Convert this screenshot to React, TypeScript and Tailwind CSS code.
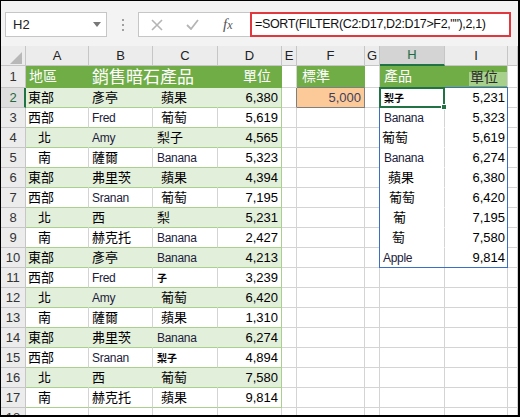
import React from 'react';

type DataRow = { a: string; b: string; c: string; d: string; cSmall?: boolean };

const DATA: DataRow[] = [
  { a: '東部', b: '彥亭', c: '蘋果', d: '6,380' },
  { a: '西部', b: 'Fred', c: '葡萄', d: '5,619' },
  { a: '北', b: 'Amy', c: '梨子', d: '4,565' },
  { a: '南', b: '薩爾', c: 'Banana', d: '5,323' },
  { a: '東部', b: '弗里茨', c: '蘋果', d: '4,394' },
  { a: '西部', b: 'Sranan', c: '葡萄', d: '7,195' },
  { a: '北', b: '西', c: '梨', d: '5,231' },
  { a: '南', b: '赫克托', c: 'Banana', d: '2,427' },
  { a: '東部', b: '彥亭', c: 'Banana', d: '4,213' },
  { a: '西部', b: 'Fred', c: '子', d: '3,239', cSmall: true },
  { a: '北', b: 'Amy', c: '葡萄', d: '6,420' },
  { a: '南', b: '薩爾', c: '蘋果', d: '1,310' },
  { a: '東部', b: '弗里茨', c: 'Banana', d: '6,274' },
  { a: '西部', b: 'Sranan', c: '梨子', d: '4,894', cSmall: true },
  { a: '北', b: '西', c: '葡萄', d: '7,580' },
  { a: '南', b: '赫克托', c: '蘋果', d: '9,814' },
];

const SORTED = [
  { p: '梨子', u: '5,231', pad: 'pl-[4px]', small: true },
  { p: 'Banana', u: '5,323', pad: 'pl-[4px]' },
  { p: '葡萄', u: '5,619', pad: 'pl-[2px]' },
  { p: 'Banana', u: '6,274', pad: 'pl-[4px]' },
  { p: '蘋果', u: '6,380', pad: 'pl-[8px]' },
  { p: '葡萄', u: '6,420', pad: 'pl-[9px]' },
  { p: '葡', u: '7,195', pad: 'pl-[13px]' },
  { p: '萄', u: '7,580', pad: 'pl-[12px]' },
  { p: 'Apple', u: '9,814', pad: 'pl-[3px]' },
];

const COL_LETTERS = ['', 'A', 'B', 'C', 'D', 'E', 'F', 'G', 'H', 'I', ''];

function Txt({ s, small }: { s: string; small?: boolean }) {
  if (small) return <span className="text-[10px] font-bold leading-none">{s}</span>;
  const latin = /^[A-Za-z]+$/.test(s);
  return latin ? (
    <span className="text-[12px] leading-none tracking-[-0.3px] text-[#1c1c3c]">{s}</span>
  ) : (
    <span className="text-[13px] leading-none">{s}</span>
  );
}

function Num({ v }: { v: string }) {
  return <span className="text-[13px] leading-none">{v}</span>;
}

function FormulaBar() {
  return (
    <div className="flex h-[45px] items-start bg-[#f3f3f3] pl-[4px] pt-[11px]">
      <div className="flex h-[25px] w-[102px] items-center justify-between border border-[#c6c6c6] bg-white pl-[7px] pr-[5px]">
        <span className="text-[13px] text-[#222]">H2</span>
        <svg width="8" height="5" viewBox="0 0 8 5">
          <path d="M0 0 L8 0 L4 5 Z" fill="#777" />
        </svg>
      </div>
      <div className="flex h-[25px] w-[31px] flex-col items-center justify-center gap-[3px]">
        <span className="h-[2px] w-[2px] bg-[#a0a0a0]" />
        <span className="h-[2px] w-[2px] bg-[#a0a0a0]" />
        <span className="h-[2px] w-[2px] bg-[#a0a0a0]" />
      </div>
      <div className="flex h-[25px] w-[112px] items-center border border-r-0 border-[#c6c6c6] bg-white pl-[12px]">
        <svg width="12" height="12" viewBox="0 0 12 12" className="mr-[23px]">
          <path d="M1 1 L11 11 M11 1 L1 11" stroke="#b5b5b5" strokeWidth="1.6" />
        </svg>
        <svg width="13" height="11" viewBox="0 0 13 11" className="mr-[24px]">
          <path d="M1 6 L5 10 L12 1" stroke="#b5b5b5" strokeWidth="1.8" fill="none" />
        </svg>
        <span className="font-['Liberation_Serif',serif] text-[15px] italic text-[#555]">
          f<span className="text-[12px]">x</span>
        </span>
      </div>
      <div className="flex h-[25px] w-[261px] items-center overflow-hidden border-2 border-[#e0383e] bg-white pl-[3px]">
        <span className="whitespace-nowrap text-[12.5px] tracking-[-0.35px] text-[#111]">
          =SORT(FILTER(C2:D17,D2:D17&gt;F2,""),2,1)
        </span>
      </div>
    </div>
  );
}

function HeaderCell({ c }: { c: number }) {
  if (c === 0) {
    return (
      <div className="relative border-b border-r border-[#c6c6c6] bg-[#ececec]">
        <svg width="13" height="13" viewBox="0 0 13 13" className="absolute left-[9px] top-[6px]">
          <path d="M12 0 L12 12 L0 12 Z" fill="#b8b8b8" />
        </svg>
      </div>
    );
  }
  if (c === 8) {
    return (
      <div className="flex items-center justify-center border-b-2 border-r border-b-[#217346] border-r-[#c6c6c6] bg-[#d4d4d4] text-[13px] text-[#1e6b40]">
        H
      </div>
    );
  }
  return (
    <div className="flex items-center justify-center border-b border-r border-[#c6c6c6] bg-[#ececec] text-[13px] text-[#222]">
      {COL_LETTERS[c]}
    </div>
  );
}

function RowHeader({ r }: { r: number }) {
  if (r === 2) {
    return (
      <div className="flex items-center justify-center border-b border-r-2 border-b-[#c6c6c6] border-r-[#217346] bg-[#dedede] pl-[1px] text-[13px] text-[#1e6b40]">
        {r}
      </div>
    );
  }
  return (
    <div className="flex items-center justify-center border-b border-r border-[#c6c6c6] bg-[#ececec] text-[13px] text-[#333]">
      {r}
    </div>
  );
}

function tableCls(r: number, c: number) {
  if (r === 1) return 'bg-[#70ad47] border-r border-b border-[#70ad47] text-white';
  if (r % 2 === 0) {
    return c === 4
      ? 'bg-[#e2efda] border-r border-b border-[#a9d08e]'
      : 'bg-[#e2efda] border-r border-b border-r-[#e2efda] border-b-[#a9d08e]';
  }
  return c === 4
    ? 'bg-white border-r border-b border-[#a9d08e]'
    : 'bg-white border-r border-b border-r-[#d4d4d4] border-b-[#a9d08e]';
}

const GRID = 'bg-white border-r border-b border-[#d4d4d4]';

function Cell({ r, c }: { r: number; c: number }) {
  // source table A1:D17
  if (c >= 1 && c <= 4 && r <= 17) {
    const cls = tableCls(r, c);
    if (r === 1) {
      if (c === 1)
        return <div className={`${cls} flex items-end pb-[4px] pl-[3px] text-[14px] leading-none`}>地區</div>;
      if (c === 2)
        return (
          <div className={`${cls} relative z-10 flex items-end whitespace-nowrap pb-[1px] pl-[3px] text-[17px] leading-none`}>
            銷售暗石產品
          </div>
        );
      if (c === 4)
        return <div className={`${cls} flex items-end justify-end pb-[4px] pr-[10px] text-[14px] leading-none`}>單位</div>;
      return <div className={cls} />;
    }
    const row = DATA[r - 2];
    if (c === 1) {
      const pad = row.a.length === 1 ? 'pl-[12px]' : 'pl-[2px]';
      return (
        <div className={`${cls} ${pad} flex items-end pb-[3px]`}>
          <Txt s={row.a} />
        </div>
      );
    }
    if (c === 2)
      return (
        <div className={`${cls} flex items-end pb-[3px] pl-[3px]`}>
          <Txt s={row.b} />
        </div>
      );
    if (c === 3) {
      const pad = row.c === '蘋果' || row.c === '葡萄' ? 'pl-[8px]' : 'pl-[4px]';
      return (
        <div className={`${cls} ${pad} flex items-end pb-[3px]`}>
          <Txt s={row.c} small={row.cSmall} />
        </div>
      );
    }
    return (
      <div className={`${cls} flex items-end justify-end pb-[3px] pr-[3px]`}>
        <Num v={row.d} />
      </div>
    );
  }

  // E column next to the criteria cell
  if (c === 5 && r === 2) return <div className="border-b border-r border-b-[#d4d4d4] border-r-[#7f7f7f] bg-white" />;

  // F column: criteria
  if (c === 6 && r === 1)
    return (
      <div className="flex items-end border-b border-r border-b-[#7f7f7f] border-r-[#70ad47] bg-[#70ad47] pb-[4px] pl-[5px] text-[14px] leading-none text-white">
        標準
      </div>
    );
  if (c === 6 && r === 2)
    return (
      <div className="flex items-end justify-end border-b border-r border-[#7f7f7f] bg-[#fcca98] pb-[3px] pr-[3px] text-[13px] leading-none text-[#3e3e5e]">
        5,000
      </div>
    );

  // H/I spilled result
  if (c === 8 && r === 1)
    return (
      <div className="flex items-end border-b border-r border-[#70ad47] bg-[#70ad47] pb-[4px] pl-[4px] text-[14px] leading-none text-white">
        產品
      </div>
    );
  if (c === 9 && r === 1)
    return (
      <div className="flex items-end justify-end border-b border-r border-b-[#70ad47] border-r-[#d4d4d4] bg-[#70ad47] pb-[1px]">
        <span className="flex h-[14px] items-end bg-[#a8d08d] pb-[2px] pl-[1px] pr-[9px] text-[14px] leading-none text-[#2a2a2a]">單位</span>
      </div>
    );
  if ((c === 8 || c === 9) && r >= 2 && r <= 10) {
    const item = SORTED[r - 2];
    const bb = r < 10 ? 'border-b-white' : 'border-b-[#d4d4d4]';
    if (c === 8) {
      return (
        <div className={`relative flex items-end border-b border-r border-r-[#d4d4d4] ${bb} bg-white pb-[3px] ${item.pad}`}>
          <Txt s={item.p} small={item.small} />
          {r === 2 && (
            <>
              <div className="pointer-events-none absolute left-[-1px] top-[-1px] z-10 h-[181px] w-[129px] border border-[#3b6fc4]" />
              <div className="pointer-events-none absolute left-[-1px] top-[-1px] z-20 h-[21px] w-[66px] border-2 border-[#217346]" />
              <div className="absolute left-[61px] top-[16px] z-30 h-[6px] w-[6px] border border-white bg-[#217346]" />
            </>
          )}
        </div>
      );
    }
    return (
      <div className={`flex items-end justify-end border-b border-r border-r-[#d4d4d4] ${bb} bg-white pb-[3px] pr-[2px]`}>
        <Num v={item.u} />
      </div>
    );
  }

  return <div className={GRID} />;
}

export default function App() {
  const rowIdx = Array.from({ length: 19 }, (_, i) => i);
  const colIdx = Array.from({ length: 11 }, (_, i) => i);
  return (
    <div className="h-[417px] w-[520px] overflow-hidden border-b-2 border-l border-r-2 border-t border-black bg-white font-['Liberation_Sans','Noto_Sans_CJK_TC',sans-serif] text-black">
      <FormulaBar />
      <div className="grid grid-cols-[25px_63px_64px_65px_64px_15px_68px_15px_65px_63px_10px] grid-rows-[20px_22px_repeat(17,20px)]">
        {rowIdx.map((r) =>
          colIdx.map((c) => {
            const key = `${r}-${c}`;
            if (r === 0) return <HeaderCell key={key} c={c} />;
            if (c === 0) return <RowHeader key={key} r={r} />;
            return <Cell key={key} r={r} c={c} />;
          }),
        )}
      </div>
    </div>
  );
}
